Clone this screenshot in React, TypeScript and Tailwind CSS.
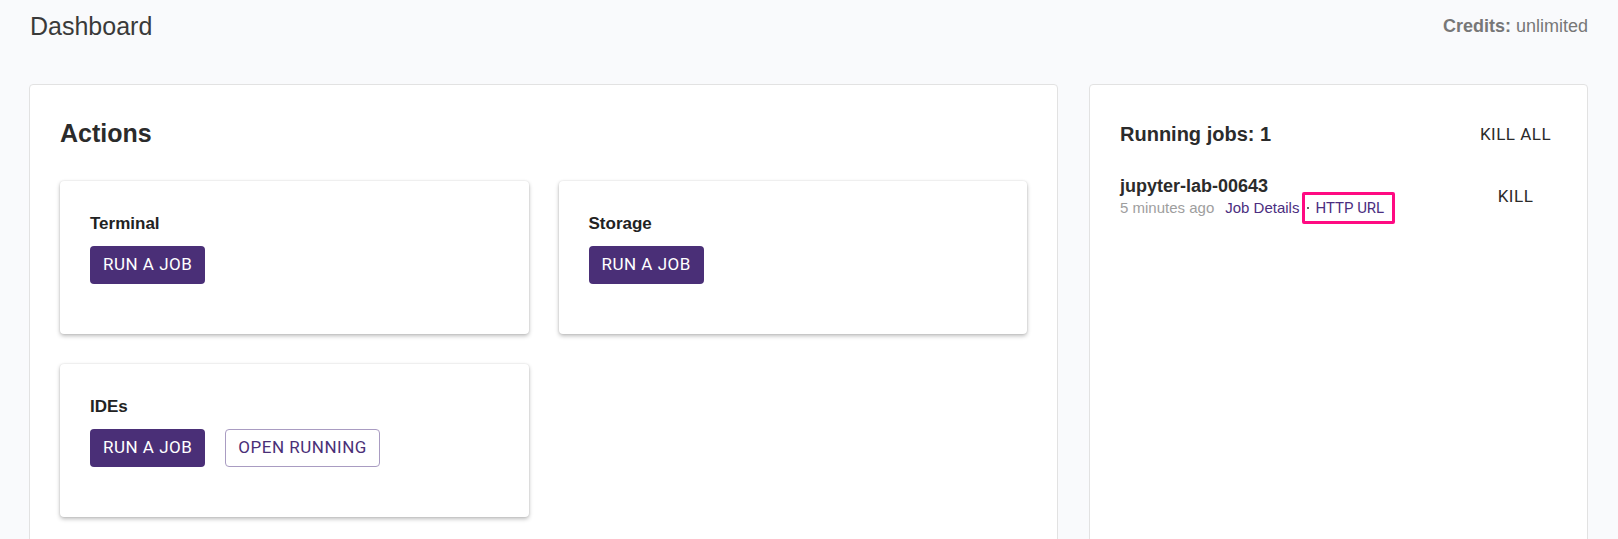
import React from 'react';

const sans = "font-['Liberation_Sans',Arial,sans-serif]";
const roboto = "font-['Roboto','Liberation_Sans',sans-serif]";

function ActionCard({ title, children }: { title: string; children: React.ReactNode }) {
  return (
    <div className="h-[153px] rounded-[4px] bg-white pl-[30px] pt-[33px] shadow-[0_2px_4px_rgba(0,0,0,0.26),0_0_2px_rgba(0,0,0,0.12)]">
      <h3 className={`${sans} text-[17px] leading-[20px] font-bold text-[#222]`}>{title}</h3>
      <div className="mt-[12px] flex gap-[20px]">{children}</div>
    </div>
  );
}

function RunButton() {
  return (
    <button className={`${roboto} h-[38px] rounded-[4px] bg-[#4a2f77] px-[13px] text-[17px] tracking-[0.5px] text-white`}>
      RUN A JOB
    </button>
  );
}

export default function App() {
  return (
    <div className="min-h-[539px] overflow-hidden bg-[#f9fafc] pl-[29px] pr-[30px]">
      <header className="flex items-start justify-between pt-[12px]">
        <h1 className={`${sans} ml-px text-[25px] leading-[29px] text-[#3a3a3a]`}>Dashboard</h1>
        <div className={`${sans} pt-[4px] text-[18px] leading-[21px] text-[#777]`}>
          <span className="font-bold">Credits:</span> unlimited
        </div>
      </header>

      <div className="mt-[43px] flex items-stretch gap-[31px]">
        <section className="w-[1029px] shrink-0 rounded-[4px] border border-[#e2e2e2] bg-white px-[30px] pt-[34px] pb-[40px]">
          <h2 className={`${sans} text-[25px] leading-[29px] font-bold text-[#2b2b2b]`}>Actions</h2>
          <div className="mt-[33px] grid grid-cols-2 gap-[30px]">
            <ActionCard title="Terminal">
              <RunButton />
            </ActionCard>
            <ActionCard title="Storage">
              <RunButton />
            </ActionCard>
            <ActionCard title="IDEs">
              <RunButton />
              <button className={`${roboto} h-[38px] rounded-[4px] border border-[#a99cc2] bg-white px-[12px] text-[17px] tracking-[0.5px] text-[#4a2f77]`}>
                OPEN RUNNING
              </button>
            </ActionCard>
          </div>
        </section>

        <section className="w-[499px] shrink-0 rounded-[4px] border border-[#e2e2e2] bg-white pt-[31px] pl-[30px] pr-[28px]">
          <div className="flex items-center justify-between">
            <h2 className={`${sans} -mt-[2px] text-[20px] leading-[24px] font-bold text-[#2b2b2b]`}>Running jobs: 1</h2>
            <button className={`${roboto} h-[38px] w-[87px] text-[17px] tracking-[0.5px] text-[#2b2b2b]`}>KILL ALL</button>
          </div>

          <div className="mt-[22px] flex items-center justify-between">
            <div>
              <div className={`${sans} text-[18px] leading-[21px] font-bold text-[#2b2b2b]`}>jupyter-lab-00643</div>
              <div className={`${sans} mt-[1px] flex items-center text-[15px] leading-[20px]`}>
                <span className="text-[#9e9e9e]">5 minutes ago</span>
                <a className="ml-[11px] text-[#4b2e80]">Job Details</a>
                <span className="relative ml-[8px] flex items-center">
                  <span className="h-[2px] w-[2px] rounded-full bg-[#333]" />
                  <a className={`${roboto} ml-[6px] text-[15px] text-[#4b2e80]`}>HTTP URL</a>
                  <span className="pointer-events-none absolute -top-[6px] -bottom-[6px] -left-[5px] -right-[11px] rounded-[2px] border-[3px] border-[#ff0a82]" />
                </span>
              </div>
            </div>
            <button className={`${roboto} h-[38px] w-[87px] text-[17px] tracking-[0.5px] text-[#2b2b2b]`}>KILL</button>
          </div>
        </section>
      </div>
    </div>
  );
}
